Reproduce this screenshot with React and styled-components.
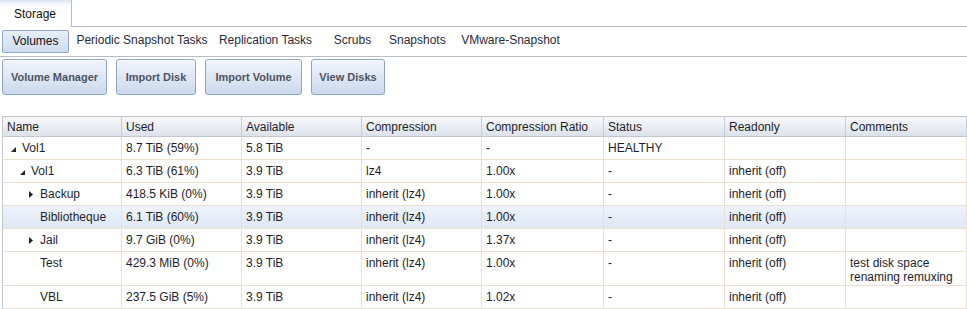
import React from "react";
import styled, { createGlobalStyle } from "styled-components";

const GlobalStyle = createGlobalStyle`
  body {
    margin: 0;
    background: #fff;
    font-family: Tahoma, "Liberation Sans", Arial, sans-serif;
    font-size: 12px;
    color: #222;
  }
`;

const Page = styled.div`
  width: 967px;
  height: 309px;
  overflow: hidden;
  background: #fff;
`;

const TabBar = styled.div`
  display: flex;
  height: 27px;
`;

const MainTab = styled.div`
  width: 72px;
  height: 27px;
  box-sizing: border-box;
  border-right: 1px solid #b9bdc8;
  background: linear-gradient(#dbe4f0 0, #f6f8fb 4px, #fff 8px);
  padding: 7px 0 0 14px;
  color: #111;
`;

const TabFill = styled.div`
  flex: 1;
  border-bottom: 1px solid #b4b8c4;
`;

const SubBar = styled.div`
  display: flex;
  align-items: center;
  height: 29px;
  padding-left: 2px;
  border-bottom: 1px solid #b9bdc8;
`;

const SubTab = styled.div`
  width: ${(p) => p.$w}px;
  height: 23px;
  box-sizing: border-box;
  line-height: 21px;
  text-align: center;
  color: #2a2a3a;
  white-space: nowrap;
  ${(p) =>
    p.$active &&
    `
    border: 1px solid #93a7c6;
    border-radius: 2px;
    background: linear-gradient(#e7eef9, #cfdcf0);
    color: #111;
  `}
`;

const Toolbar = styled.div`
  display: flex;
  gap: 9px;
  padding: 2px 2px 0;
  height: 36px;
`;

const ActionButton = styled.button`
  width: ${(p) => p.$w}px;
  height: 36px;
  padding: 0;
  border: 1px solid #8fa3c4;
  border-radius: 3px;
  background: linear-gradient(#f1f5fb, #cbd9ee);
  font-family: Tahoma, "Liberation Sans", Arial, sans-serif;
  font-size: 11px;
  font-weight: bold;
  color: #4f5461;
  box-shadow: inset 0 1px 0 #fff;
`;

const Grid = styled.div`
  margin: 21px 0 0 2px;
  border-left: 1px solid #c2c6ce;
  border-top: 1px solid #c2c6ce;
`;

const cols = "119px 120px 120px 120px 122px 121px 121px 1fr";

const HeadRow = styled.div`
  display: grid;
  grid-template-columns: ${cols};
  height: 20px;
  box-sizing: border-box;
  border-bottom: 1px solid #c2c6ce;
  background: linear-gradient(#f7f8fb, #dde2ea);
`;

const HeadCell = styled.div`
  padding: 3px 0 0 4px;
  border-right: 1px solid #c9cdd5;
  color: #1e1e2c;
  white-space: nowrap;
  overflow: hidden;
`;

const Row = styled.div`
  display: grid;
  grid-template-columns: ${cols};
  border-bottom: 1px solid #ecdfcf;
  background: ${(p) =>
    p.$selected ? "linear-gradient(#eef3fb, #dfe8f5)" : "#fff"};
`;

const Cell = styled.div`
  box-sizing: border-box;
  min-height: 22px;
  padding: 4px 4px 1px;
  line-height: 14px;
  border-right: 1px solid #ecdfcf;
  color: #1e1e2c;
  display: flex;
  align-items: flex-start;
`;

const Indent = styled.span`
  display: inline-block;
  flex: none;
  width: ${(p) => 15 + p.$level * 9}px;
  height: 14px;
  position: relative;
`;

const Toggle = styled.svg`
  position: absolute;
  right: ${(p) => (p.$open ? 6 : 7)}px;
  top: ${(p) => (p.$open ? 6 : 4)}px;
`;

function Expander({ level, state }) {
  return (
    <Indent $level={level}>
      {state === "open" && (
        <Toggle $open width="5" height="5" viewBox="0 0 5 5">
          <polygon points="5,0 5,5 0,5" fill="#222" />
        </Toggle>
      )}
      {state === "closed" && (
        <Toggle width="4" height="7" viewBox="0 0 4 7">
          <polygon points="0,0 4,3.5 0,7" fill="#222" />
        </Toggle>
      )}
    </Indent>
  );
}

const subTabs = [
  ["Volumes", 67],
  ["Periodic Snapshot Tasks", 146],
  ["Replication Tasks", 101],
  ["Scrubs", 73],
  ["Snapshots", 56],
  ["VMware-Snapshot", 131],
];

const actions = [
  ["Volume Manager", 105],
  ["Import Disk", 80],
  ["Import Volume", 97],
  ["View Disks", 74],
];

const headers = [
  "Name",
  "Used",
  "Available",
  "Compression",
  "Compression Ratio",
  "Status",
  "Readonly",
  "Comments",
];

const rows = [
  { name: "Vol1", level: 0, state: "open", cells: ["8.7 TiB (59%)", "5.8 TiB", "-", "-", "HEALTHY", "", ""] },
  { name: "Vol1", level: 1, state: "open", cells: ["6.3 TiB (61%)", "3.9 TiB", "lz4", "1.00x", "-", "inherit (off)", ""] },
  { name: "Backup", level: 2, state: "closed", cells: ["418.5 KiB (0%)", "3.9 TiB", "inherit (lz4)", "1.00x", "-", "inherit (off)", ""] },
  { name: "Bibliotheque", level: 2, selected: true, cells: ["6.1 TiB (60%)", "3.9 TiB", "inherit (lz4)", "1.00x", "-", "inherit (off)", ""] },
  { name: "Jail", level: 2, state: "closed", cells: ["9.7 GiB (0%)", "3.9 TiB", "inherit (lz4)", "1.37x", "-", "inherit (off)", ""] },
  { name: "Test", level: 2, cells: ["429.3 MiB (0%)", "3.9 TiB", "inherit (lz4)", "1.00x", "-", "inherit (off)", "test disk space renaming remuxing"] },
  { name: "VBL", level: 2, cells: ["237.5 GiB (5%)", "3.9 TiB", "inherit (lz4)", "1.02x", "-", "inherit (off)", ""] },
];

export default function App() {
  return (
    <Page>
      <GlobalStyle />
      <TabBar>
        <MainTab>Storage</MainTab>
        <TabFill />
      </TabBar>
      <SubBar>
        {subTabs.map(([label, w], i) => (
          <SubTab key={label} $w={w} $active={i === 0}>
            {label}
          </SubTab>
        ))}
      </SubBar>
      <Toolbar>
        {actions.map(([label, w]) => (
          <ActionButton key={label} $w={w}>
            {label}
          </ActionButton>
        ))}
      </Toolbar>
      <Grid>
        <HeadRow>
          {headers.map((h) => (
            <HeadCell key={h}>{h}</HeadCell>
          ))}
        </HeadRow>
        {rows.map((r, i) => (
          <Row key={i} $selected={r.selected}>
            <Cell>
              <Expander level={r.level} state={r.state} />
              {r.name}
            </Cell>
            {r.cells.map((c, j) => (
              <Cell key={j}>{c}</Cell>
            ))}
          </Row>
        ))}
      </Grid>
    </Page>
  );
}
